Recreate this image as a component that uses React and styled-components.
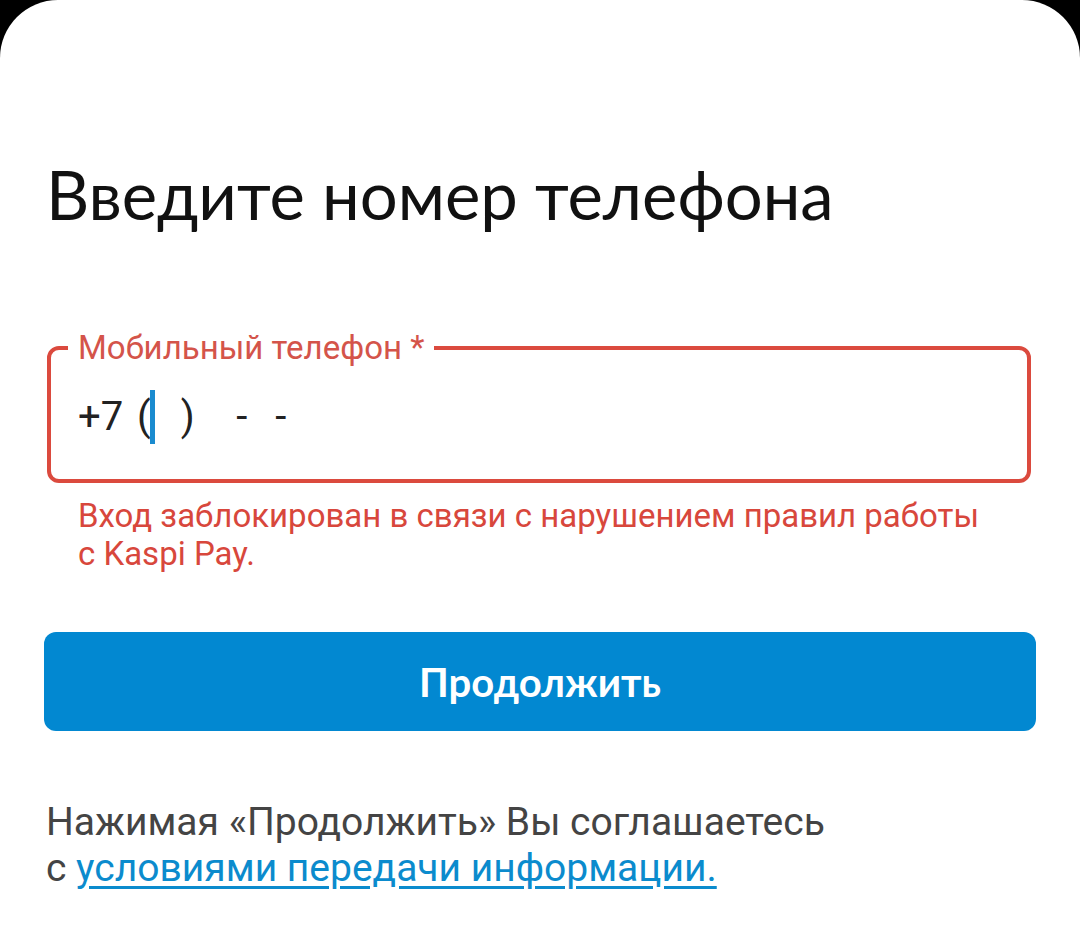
import React from "react";
import styled, { createGlobalStyle } from "styled-components";

const GlobalStyle = createGlobalStyle`
  body {
    margin: 0;
    background: #000;
  }
`;

const Sheet = styled.div`
  box-sizing: border-box;
  min-height: 950px;
  background: #fff;
  border-radius: 58px 58px 0 0;
  padding: 146px 44px 0 44px;
  font-family: Roboto, "Noto Sans", sans-serif;
`;

const Title = styled.h1`
  margin: 0 0 0 2px;
  font-family: Lato, "Open Sans", sans-serif;
  font-size: 67px;
  font-weight: 400;
  line-height: 96px;
  color: #111;
`;

const Field = styled.fieldset`
  box-sizing: border-box;
  margin: 88px 5px 0 3px;
  height: 153px;
  padding: 0 0 0 17px;
  border: 4px solid #db4a3e;
  border-radius: 12px;
`;

const Label = styled.legend`
  padding: 0 10px;
  font-size: 33px;
  line-height: 36px;
  color: #d4544a;
`;

const InputRow = styled.div`
  display: flex;
  align-items: center;
  height: 54px;
  padding: 24px 0 0 10px;
  font-size: 40px;
  line-height: 54px;
  word-spacing: 4px;
  color: #222;
  white-space: pre;
`;

const Caret = styled.span`
  display: inline-block;
  width: 5px;
  height: 54px;
  margin: 0 -2px 0 -1px;
  background: #1a8bcf;
`;

const ErrorText = styled.p`
  margin: 14px 0 0 34px;
  font-size: 33px;
  line-height: 38px;
  color: #d8473c;
`;

const Button = styled.button`
  display: block;
  width: 100%;
  height: 99px;
  margin-top: 59px;
  border: none;
  border-radius: 12px;
  background: #0288d1;
  color: #fff;
  font-family: Lato, "Open Sans", sans-serif;
  font-size: 40px;
  font-weight: 700;
`;

const Note = styled.p`
  margin: 68px 0 0 2px;
  font-size: 39px;
  line-height: 46px;
  color: #444;
`;

const Link = styled.a`
  color: #0b8bcd;
  text-decoration: underline;
  text-underline-offset: 5px;
`;

export default function App() {
  return (
    <>
      <GlobalStyle />
      <Sheet>
        <Title>Введите номер телефона</Title>
        <Field>
          <Label>Мобильный телефон *</Label>
          <InputRow>
            +7 (<Caret />  )   -  -
          </InputRow>
        </Field>
        <ErrorText>
          Вход заблокирован в связи с нарушением правил работы
          <br />с Kaspi Pay.
        </ErrorText>
        <Button>Продолжить</Button>
        <Note>
          Нажимая «Продолжить» Вы соглашаетесь
          <br />с <Link href="#">условиями передачи информации.</Link>
        </Note>
      </Sheet>
    </>
  );
}
